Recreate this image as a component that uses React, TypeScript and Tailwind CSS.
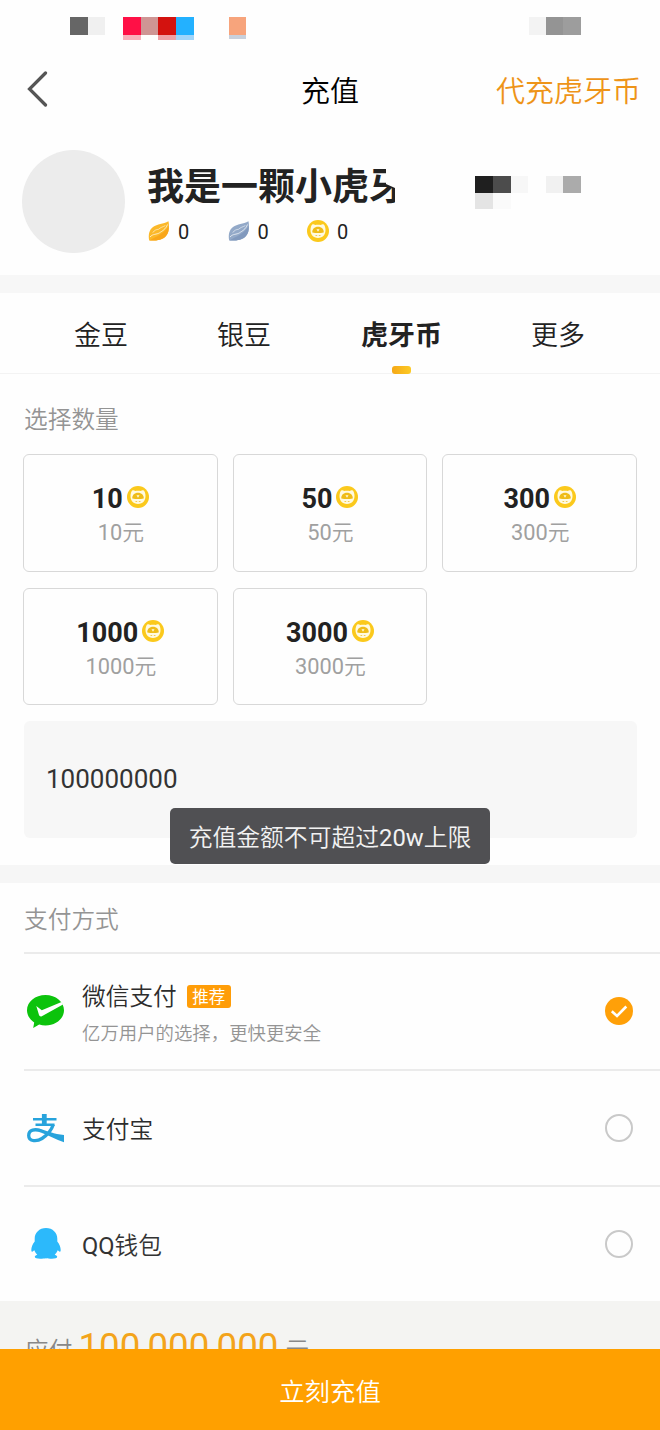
import React from 'react';

// Gold / silver bean
const BeanIcon: React.FC<{ light: string; dark: string }> = ({ light, dark }) => (
  <svg viewBox="0 0 22 22" className="h-[22px] w-[22px]">
    <path d="M1.200 20.500C0.200 15 1 10 5 7C9.500 3.500 15 4.500 20.500 1.200C21.500 6.500 21.200 12 18 16C14.500 20.500 7 20.800 1.200 20.500Z" fill={light} />
    <path d="M1.500 20.500C8 16.500 17 13.500 20.600 6C21.200 10.500 20.300 13.500 18 16C14.500 20.500 7 20.800 1.500 20.500Z" fill={dark} />
    <path d="M2 17C5 13.500 8.500 14.800 11.500 12.800C14.500 10.800 17.500 9.500 19.500 4.500" stroke="#fff" strokeWidth="1" fill="none" opacity="0.700" />
    <path d="M5 12.300C6.500 10 8.500 9.500 10.500 9.300C12.500 7.500 14.500 7 17 5.800" stroke="#fff" strokeWidth="0.900" fill="none" strokeLinecap="round" opacity="0.600" />
  </svg>
);

const CoinIcon: React.FC = () => (
  <svg viewBox="0 0 22 22" className="h-[22px] w-[22px] shrink-0">
    <circle cx="11" cy="11" r="11" fill="#fbc91c" />
    <path d="M5 4.800C6 4 7.200 4.300 8.200 5C10 4.600 12 4.600 13.800 5C14.800 4.300 16 4 17 4.800C19 7.500 19 12.500 17 15.200C14 18.800 8 18.800 5 15.200C3 12.500 3 7.500 5 4.800Z" fill="#fffae0" />
    <path d="M5.300 12.500C5 9 7.500 6.700 11 6.700C14.500 6.700 17 9 16.700 12.500C13 13.300 9 13.300 5.300 12.500Z" fill="#efbc18" />
    <path d="M9.500 9.300H12.500L11 11.800Z" fill="#fffae0" />
    <path d="M8.500 15.500H10.200M11.800 15.500H13.500" stroke="#f3ca50" strokeWidth="1" />
  </svg>
);

const WechatIcon: React.FC = () => (
  <svg viewBox="0 0 37 33" className="h-[33px] w-[37px]">
    <path d="M18.500 0C8.300 0 0 6.800 0 15.300C0 20.200 2.800 24.600 7.200 27.400L6.200 33L12.200 29.600C14.200 30.200 16.300 30.500 18.500 30.500C28.700 30.500 37 23.700 37 15.300C37 6.800 28.700 0 18.500 0Z" fill="#0cc30c" />
    <path d="M9.300 11L14.800 15.200L34.500 7L36 9.500L14.800 21.200C13.600 21.700 12.400 21.300 12 20Z" fill="#fff" />
  </svg>
);

const AlipayIcon: React.FC = () => (
  <svg viewBox="0 0 37 29" className="h-[29px] w-[37px]" fill="none" stroke="#27a3dc">
    <path d="M17.300 0V11.500" strokeWidth="4.800" />
    <path d="M6 5.300H29.500M8.500 10.700H27.500" strokeWidth="2.400" />
    <path d="M26.300 10.500C24.500 16 20.500 21 15 24.500C10.500 27.500 1.700 28.200 1.700 21.500C1.700 15.500 8 14.800 14 16.800" strokeWidth="3.300" />
    <path d="M12.500 14.700C20 16.800 27 20 37 21V28.300C29 26 21 20.800 12.500 18Z" fill="#27a3dc" stroke="none" />
  </svg>
);

const QQIcon: React.FC = () => (
  <svg viewBox="0 0 30 31" className="mb-0.5 h-[31px] w-[30px]" fill="#2cb9fb">
    <path d="M15 0C8.300 0 3.700 4.800 3.700 10.800V13.500C1.500 16 0.300 19.500 0.300 22C0.300 24 1.300 24.300 2.300 23L3.300 22.300C4 24.200 5 25.500 6.300 26.700C4.500 27.300 3.800 28 3.800 28.800C3.800 30.200 6.200 30.700 9 30.700C11.500 30.700 13.700 30.400 15 30.200C16.300 30.400 18.500 30.700 21 30.700C23.800 30.700 26.200 30.200 26.200 28.800C26.200 28 25.500 27.300 23.700 26.700C25 25.500 26 24.200 26.700 22.300L27.700 23C28.700 24.300 29.700 24 29.700 22C29.700 19.500 28.500 16 26.300 13.500V10.800C26.300 4.800 21.700 0 15 0Z" />
  </svg>
);

const Radio: React.FC<{ checked?: boolean }> = ({ checked }) =>
  checked ? (
    <svg viewBox="0 0 28 28" className="mb-0.5 h-7 w-7">
      <circle cx="14" cy="14" r="14" fill="#ffa008" />
      <path d="M6.800 14.300L12 19L21.300 9.500" fill="none" stroke="#fff" strokeWidth="2.600" />
    </svg>
  ) : (
    <div className="mb-px h-7 w-7 rounded-full border-2 border-[#c9c9c9]" />
  );

const balances = [
  { id: 'gold', icon: <BeanIcon light="#fbb829" dark="#f9a61a" /> },
  { id: 'silver', icon: <BeanIcon light="#93a9c8" dark="#8199bd" /> },
  { id: 'coin', icon: <CoinIcon /> },
];

const amounts = [10, 50, 300, 1000, 3000];

const App: React.FC = () => {
  return (
    <div className="relative flex h-[1430px] w-[660px] flex-col overflow-hidden bg-[#fefefe] font-['Roboto','Noto_Sans_CJK_SC',sans-serif] text-[#222]">
      {/* Status bar */}
      <div className="flex h-[50px] shrink-0 items-start pt-[17px] pl-[70px]">
        <div className="h-[18px] w-[18px] bg-[#666]" />
        <div className="h-[18px] w-[17px] bg-[#f0f0f0]" />
        <div className="ml-[18px] h-[23px] w-[18px] border-b-[5px] border-[#f9b0bb] bg-[#ff1046]" />
        <div className="h-[18px] w-[17px] bg-[#cf9594]" />
        <div className="h-[23px] w-[18px] border-b-[5px] border-[#eea0a6] bg-[#d3120f]" />
        <div className="h-[23px] w-[18px] border-b-[5px] border-[#a0d5fa] bg-[#23b1ff]" />
        <div className="ml-[35px] h-[22px] w-[17px] border-b-4 border-[#c8d0dc] bg-[#f7a47c]" />
        <div className="ml-[283px] h-[18px] w-[17px] bg-[#f3f3f3]" />
        <div className="h-[18px] w-[17px] bg-[#949494]" />
        <div className="h-[18px] w-[18px] bg-[#9d9d9d]" />
      </div>

      {/* Title bar */}
      <header className="grid h-20 shrink-0 grid-cols-3 items-center pr-[19px] pl-[27px]">
        <svg viewBox="0 0 22 36" className="mb-0.5 h-9 w-[22px]" fill="none" stroke="#555" strokeWidth="3.200" strokeLinecap="round">
          <path d="M18.500 2L2.500 18L18.500 34" />
        </svg>
        <h1 className="-ml-[8px] pt-1 text-center text-[29px] leading-none font-[350] text-black">充值</h1>
        <button className="pt-1 text-right text-[29px] leading-none font-[350] whitespace-nowrap text-[#ee9418]">代充虎牙币</button>
      </header>

      {/* Profile */}
      <section className="flex h-[145px] shrink-0 pt-5 pl-[22px]">
        <div className="h-[103px] w-[103px] rounded-full bg-[#ececec]" />
        <div className="ml-[22px] w-[328px] pt-4">
          <div className="h-[44px] w-[248px] overflow-hidden text-[37px] leading-[44px] font-bold whitespace-nowrap [clip-path:polygon(0_0,239px_0,239px_18px,248px_22px,248px_100%,0_100%)]">我是一颗小虎牙</div>
          <div className="mt-2.5 flex gap-10 pl-px">
            {balances.map((b) => (
              <div key={b.id} className="flex h-[22px] items-center gap-2 text-[20px] leading-none">
                {b.icon}
                <span className="w-[9.5px] pt-0.5">0</span>
              </div>
            ))}
          </div>
        </div>
        <div className="pt-[26px]">
          <div className="flex">
            <div className="h-[17px] w-[18px] bg-[#1f1f1f]" />
            <div className="h-[17px] w-[18px] bg-[#4c4c4c]" />
            <div className="h-[17px] w-[17px] bg-[#f7f7f7]" />
            <div className="ml-[18px] h-[17px] w-[17px] bg-[#f1f1f1]" />
            <div className="h-[17px] w-[18px] bg-[#ababab]" />
          </div>
          <div className="flex">
            <div className="h-4 w-[18px] bg-[#e4e4e4]" />
            <div className="h-4 w-[18px] bg-[#fafafa]" />
          </div>
        </div>
      </section>

      <div className="h-[18px] shrink-0 bg-[#f7f7f7]" />

      {/* Tabs */}
      <nav className="flex h-[81px] shrink-0 border-b border-[#f3f3f3] pt-[23px] pl-[74px] text-[27px] leading-[40px] font-[350]">
        <button className="h-10 w-[54px]">金豆</button>
        <button className="ml-[89px] h-10 w-[54px]">银豆</button>
        <button className="ml-[90px] flex w-[81px] flex-col items-center font-bold">
          虎牙币
          <span className="mt-[10px] h-2 w-[19px] shrink-0 rounded-[3px] bg-linear-to-r from-[#f5a816] to-[#fcca25]" />
        </button>
        <button className="ml-[89px] h-10 w-[54px]">更多</button>
      </nav>

      {/* Amount */}
      <section className="h-[491px] shrink-0 px-[23px] pt-[28px]">
        <h2 className="pl-px text-[23.700px] leading-9 font-[350] text-[#949494]">选择数量</h2>
        <div className="mt-4 grid grid-cols-3 gap-x-[15px] gap-y-4">
          {amounts.map((n) => (
            <button key={n} className="flex h-[117.5px] flex-col items-center rounded-md border-[1px] border-[#d8d8d8] pt-[27px]">
              <span className="flex h-8 gap-1 text-[27px] leading-[34px] font-bold">
                {n}
                <span className="pt-[4px]"><CoinIcon /></span>
              </span>
              <span className="mt-1 pl-px text-[21.800px] leading-[30px] text-[#a0a0a0]">{n}<span className="font-[350]">元</span></span>
            </button>
          ))}
        </div>
        <div className="mt-4 ml-px flex h-[117px] items-center rounded-md bg-[#f7f7f7] pl-[22px] text-[26px] text-[#333]">100000000</div>
      </section>

      <div className="h-[18px] shrink-0 bg-[#f6f6f6]" />

      {/* Payment methods */}
      <section className="h-[418px] shrink-0 pl-6">
        <h2 className="flex h-[71px] items-center border-b-2 border-[#ebebeb] pt-1.5 text-[23.700px] font-[350] text-[#949494]">支付方式</h2>
        <div className="flex h-[117px] items-center border-b-2 border-[#ebebeb] pr-[27px] pl-[3px]">
          <WechatIcon />
          <div className="ml-[18px] flex-1 pt-[3px]">
            <div className="flex items-center gap-[10px] text-[23.700px] leading-9 font-[350] text-[#2c2c2c]">
              微信支付
              <span className="h-[23px] rounded-[3px] bg-[#ff9d08] px-[5.500px] text-[16.500px] leading-[26px] font-normal text-white">推荐</span>
            </div>
            <div className="mt-[5px] text-[18.400px] leading-7 font-[350] text-[#949494]">亿万用户的选择，更快更安全</div>
          </div>
          <Radio checked />
        </div>
        <div className="flex h-[116px] items-center border-b-2 border-[#ebebeb] pr-[27px] pl-[3px]">
          <AlipayIcon />
          <div className="ml-[18px] flex-1 pt-[5px] text-[23.700px] font-[350] text-[#2c2c2c]">支付宝</div>
          <Radio />
        </div>
        <div className="flex h-[114px] items-center pr-[27px] pl-[7px]">
          <QQIcon />
          <div className="ml-[21px] flex-1 pt-[5px] text-[23.700px] text-[#333]">QQ<span className="font-[350]">钱包</span></div>
          <Radio />
        </div>
      </section>

      {/* Total, partly covered by the submit button */}
      <div className="flex h-[48px] shrink-0 items-baseline overflow-hidden bg-[#f4f4f2] pt-[22px] pl-[25px] text-[23.700px] leading-[48px] text-[#888]">
        <span className="font-[350]">应付</span>
        <span className="mr-[7px] ml-[6px] text-[36.700px] text-[#f3a41b]">100,000,000</span>
        <span className="font-[350]">元</span>
      </div>
      <button className="flex-1 bg-[#ffa000] pt-1.5 text-[25.400px] leading-none font-[350] text-white">立刻充值</button>

      {/* Toast */}
      <div className="absolute top-[808px] left-[170px] flex h-14 w-80 items-center justify-center rounded-[5px] bg-[#505053] pt-[5px] text-[23.800px] font-[350] whitespace-nowrap text-[#f2f2f2]">
        充值金额不可超过<span className="font-normal">20w</span>上限
      </div>
    </div>
  );
};

export default App;
